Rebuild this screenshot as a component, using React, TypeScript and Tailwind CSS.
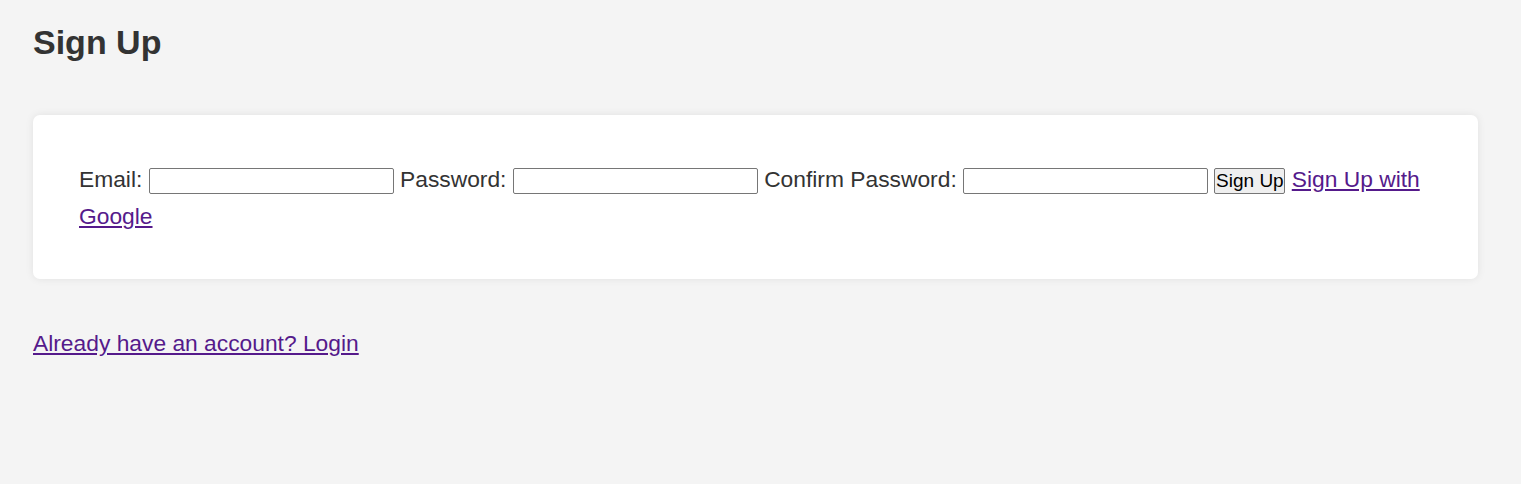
export default function App() {
  return (
    <div className="min-h-[484px] bg-[#f4f4f4] pl-[33px] pr-[43px] pt-[23px] text-[#333] font-['Liberation_Sans',Arial,sans-serif]">
      <h2 className="text-[34px] font-bold leading-[39px]">Sign Up</h2>

      <div className="mt-[53px] rounded-[7px] bg-white px-[46px] pt-[46px] pb-[44px] shadow-[0_0_8px_rgba(0,0,0,0.08)]">
        <form className="text-[22.8px] leading-[37px]">
          <label>Email:</label>{" "}
          <input
            type="email"
            className="h-[26px] w-[245px] rounded-[2px] border border-[#767676] bg-white px-1 align-[-1px]"
          />{" "}
          <label>Password:</label>{" "}
          <input
            type="password"
            className="h-[26px] w-[245px] rounded-[2px] border border-[#767676] bg-white px-1 align-[-1px]"
          />{" "}
          <label>Confirm Password:</label>{" "}
          <input
            type="password"
            className="h-[26px] w-[245px] rounded-[2px] border border-[#767676] bg-white px-1 align-[-1px]"
          />{" "}
          <button
            type="button"
            className="h-[26px] w-[71px] rounded-[2px] border border-[#767676] bg-[#efefef] text-[19px] leading-[24px] text-black align-[0px]"
          >
            Sign Up
          </button>{" "}
          <a href="#" className="text-[#551a8b] underline">
            Sign Up with Google
          </a>
        </form>
      </div>

      <div className="mt-[51px] text-[22.8px] leading-[26px]">
        <a href="#" className="text-[#551a8b] underline">
          Already have an account? Login
        </a>
      </div>
    </div>
  );
}
